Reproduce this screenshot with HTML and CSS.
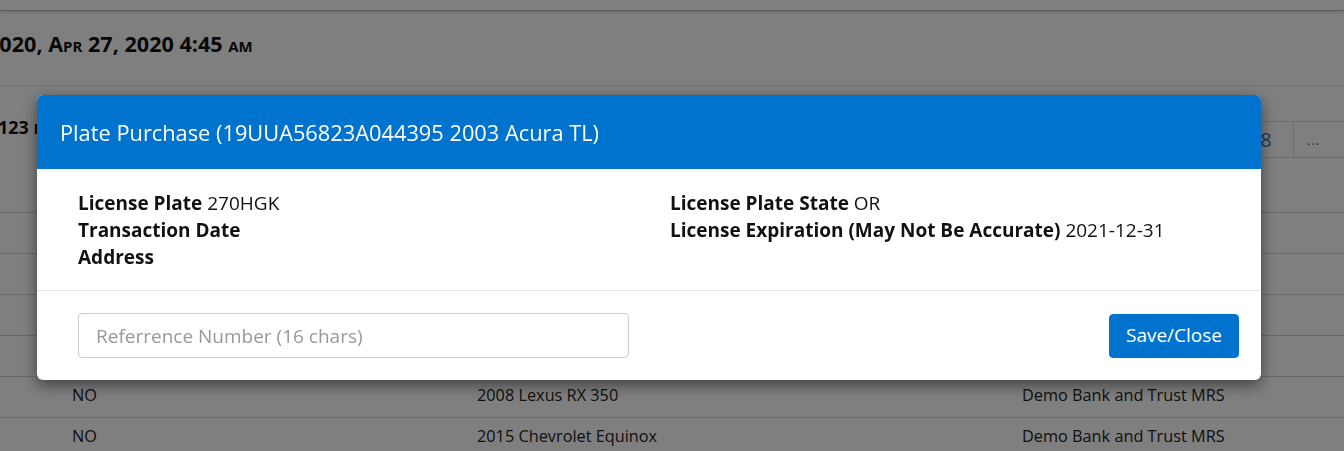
FILE: index.html
```html
<!DOCTYPE html>
<html>
<head>
<meta charset="utf-8">
<link rel="stylesheet" href="styles.css">
</head>
<body>
<div class="page">
  <div class="topbar"></div>
  <div class="heading"><h1 class="title">2020, Apr 27, 2020 4:45 am</h1></div>
  <div class="toolbar">
    <div class="address">123 main st</div>
    <ul class="pager">
      <li class="pg">7</li>
      <li class="pg">8</li>
      <li class="pg more">...</li>
    </ul>
  </div>
  <div class="rows">
    <div class="row"><span class="c1">NO</span><span class="c2">2012 Honda Accord</span><span class="c3">Demo Bank and Trust MRS</span></div>
    <div class="row"><span class="c1">NO</span><span class="c2">2014 Ford F-150</span><span class="c3">Demo Bank and Trust MRS</span></div>
    <div class="row"><span class="c1">NO</span><span class="c2">2011 Toyota Camry</span><span class="c3">Demo Bank and Trust MRS</span></div>
    <div class="row"><span class="c1">NO</span><span class="c2">2016 Nissan Altima</span><span class="c3">Demo Bank and Trust MRS</span></div>
    <div class="row"><span class="c1">NO</span><span class="c2">2008 Lexus RX 350</span><span class="c3">Demo Bank and Trust MRS</span></div>
    <div class="row"><span class="c1">NO</span><span class="c2">2015 Chevrolet Equinox</span><span class="c3">Demo Bank and Trust MRS</span></div>
  </div>
</div>
<div class="backdrop"></div>
<div class="modal">
  <div class="modal-header">Plate Purchase (19UUA56823A044395 2003 Acura TL)</div>
  <div class="modal-body">
    <div class="col">
      <div><b>License Plate</b> 270HGK</div>
      <div><b>Transaction Date</b></div>
      <div><b>Address</b></div>
    </div>
    <div class="col">
      <div><b>License Plate State</b> OR</div>
      <div><b>License Expiration (May Not Be Accurate)</b> 2021-12-31</div>
    </div>
  </div>
  <div class="modal-footer">
    <input class="ref" type="text" placeholder="Referrence Number (16 chars)">
    <button class="btn">Save/Close</button>
  </div>
</div>
</body>
</html>
```
FILE: styles.css
```css
* { box-sizing: border-box; }
html, body { margin: 0; padding: 0; }
body {
  width: 1344px;
  height: 451px;
  overflow: hidden;
  background: #fff;
  font-family: "Open Sans", "Liberation Sans", sans-serif;
  color: #333;
}
.page { width: 1344px; }
.topbar {
  height: 11px;
  background: #fff;
  border-bottom: 1px solid #bbb;
  box-shadow: 0 1px 3px rgba(0,0,0,0.2);
}
.heading {
  height: 75px;
  border-bottom: 1px solid #e5e5e5;
  display: flex;
  align-items: center;
  overflow: hidden;
}
.title {
  margin: 0 0 0 -13px;
  font-size: 21.6px;
  font-weight: 700;
  font-variant: small-caps;
  color: #111;
  white-space: nowrap;
  padding-bottom: 10px;
}
.toolbar {
  height: 127px;
  display: flex;
  justify-content: space-between;
  align-items: flex-start;
  border-bottom: 1px solid #d4d4d4;
}
.address {
  margin-top: 29px;
  margin-left: -2px;
  font-size: 18px;
  font-weight: 700;
  color: #111;
  white-space: nowrap;
}
.pager {
  list-style: none;
  margin: 35px -29px 0 0;
  padding: 0;
  display: flex;
}
.pg {
  height: 37px;
  width: 56px;
  border: 1px solid #ddd;
  margin-left: -1px;
  display: flex;
  align-items: center;
  justify-content: center;
  font-size: 20px;
  color: #337ab7;
}
.pg.more {
  width: 80px;
  justify-content: flex-start;
  padding-left: 13px;
  font-size: 13px;
  letter-spacing: 1px;
  color: #555;
}
.row {
  height: 41px;
  border-bottom: 1px solid #d4d4d4;
  display: flex;
  align-items: center;
  font-size: 16.3px;
  color: #222;
  padding-bottom: 4px;
}
.c1 { margin-left: 72px; width: 405px; }
.c2 { width: 545px; }
.backdrop {
  position: fixed;
  inset: 0;
  background: rgba(0,0,0,0.5);
}
.modal {
  position: fixed;
  top: 95px;
  left: 37px;
  width: 1224px;
  height: 285px;
  background: #fff;
  border-radius: 6px;
  overflow: hidden;
  box-shadow: 0 5px 15px rgba(0,0,0,0.5);
}
.modal-header {
  height: 74px;
  background: #0073cf;
  color: #fff;
  font-size: 21.8px;
  display: flex;
  align-items: center;
  padding-left: 23px;
}
.modal-body {
  height: 122px;
  display: grid;
  grid-template-columns: 592px 1fr;
  padding: 21px 0 0 41px;
  border-bottom: 1px solid #e5e5e5;
  font-size: 19px;
  line-height: 27px;
  color: #111;
}
.modal-body b { font-weight: 700; }
.modal-footer {
  display: flex;
  justify-content: space-between;
  align-items: center;
  padding: 22px 22px 0 41px;
}
.ref {
  width: 551px;
  height: 45px;
  border: 1px solid #ccc;
  border-radius: 4px;
  padding: 0 17px;
  font-family: "Open Sans", "Liberation Sans", sans-serif;
  font-size: 19px;
  color: #555;
}
.ref::placeholder { color: #999; }
.btn {
  width: 130px;
  height: 44px;
  background: #0073cf;
  border: 1px solid #0073cf;
  border-radius: 4px;
  color: #fff;
  font-family: "Open Sans", "Liberation Sans", sans-serif;
  font-size: 19px;
  padding: 0 0 2px;
}
```
